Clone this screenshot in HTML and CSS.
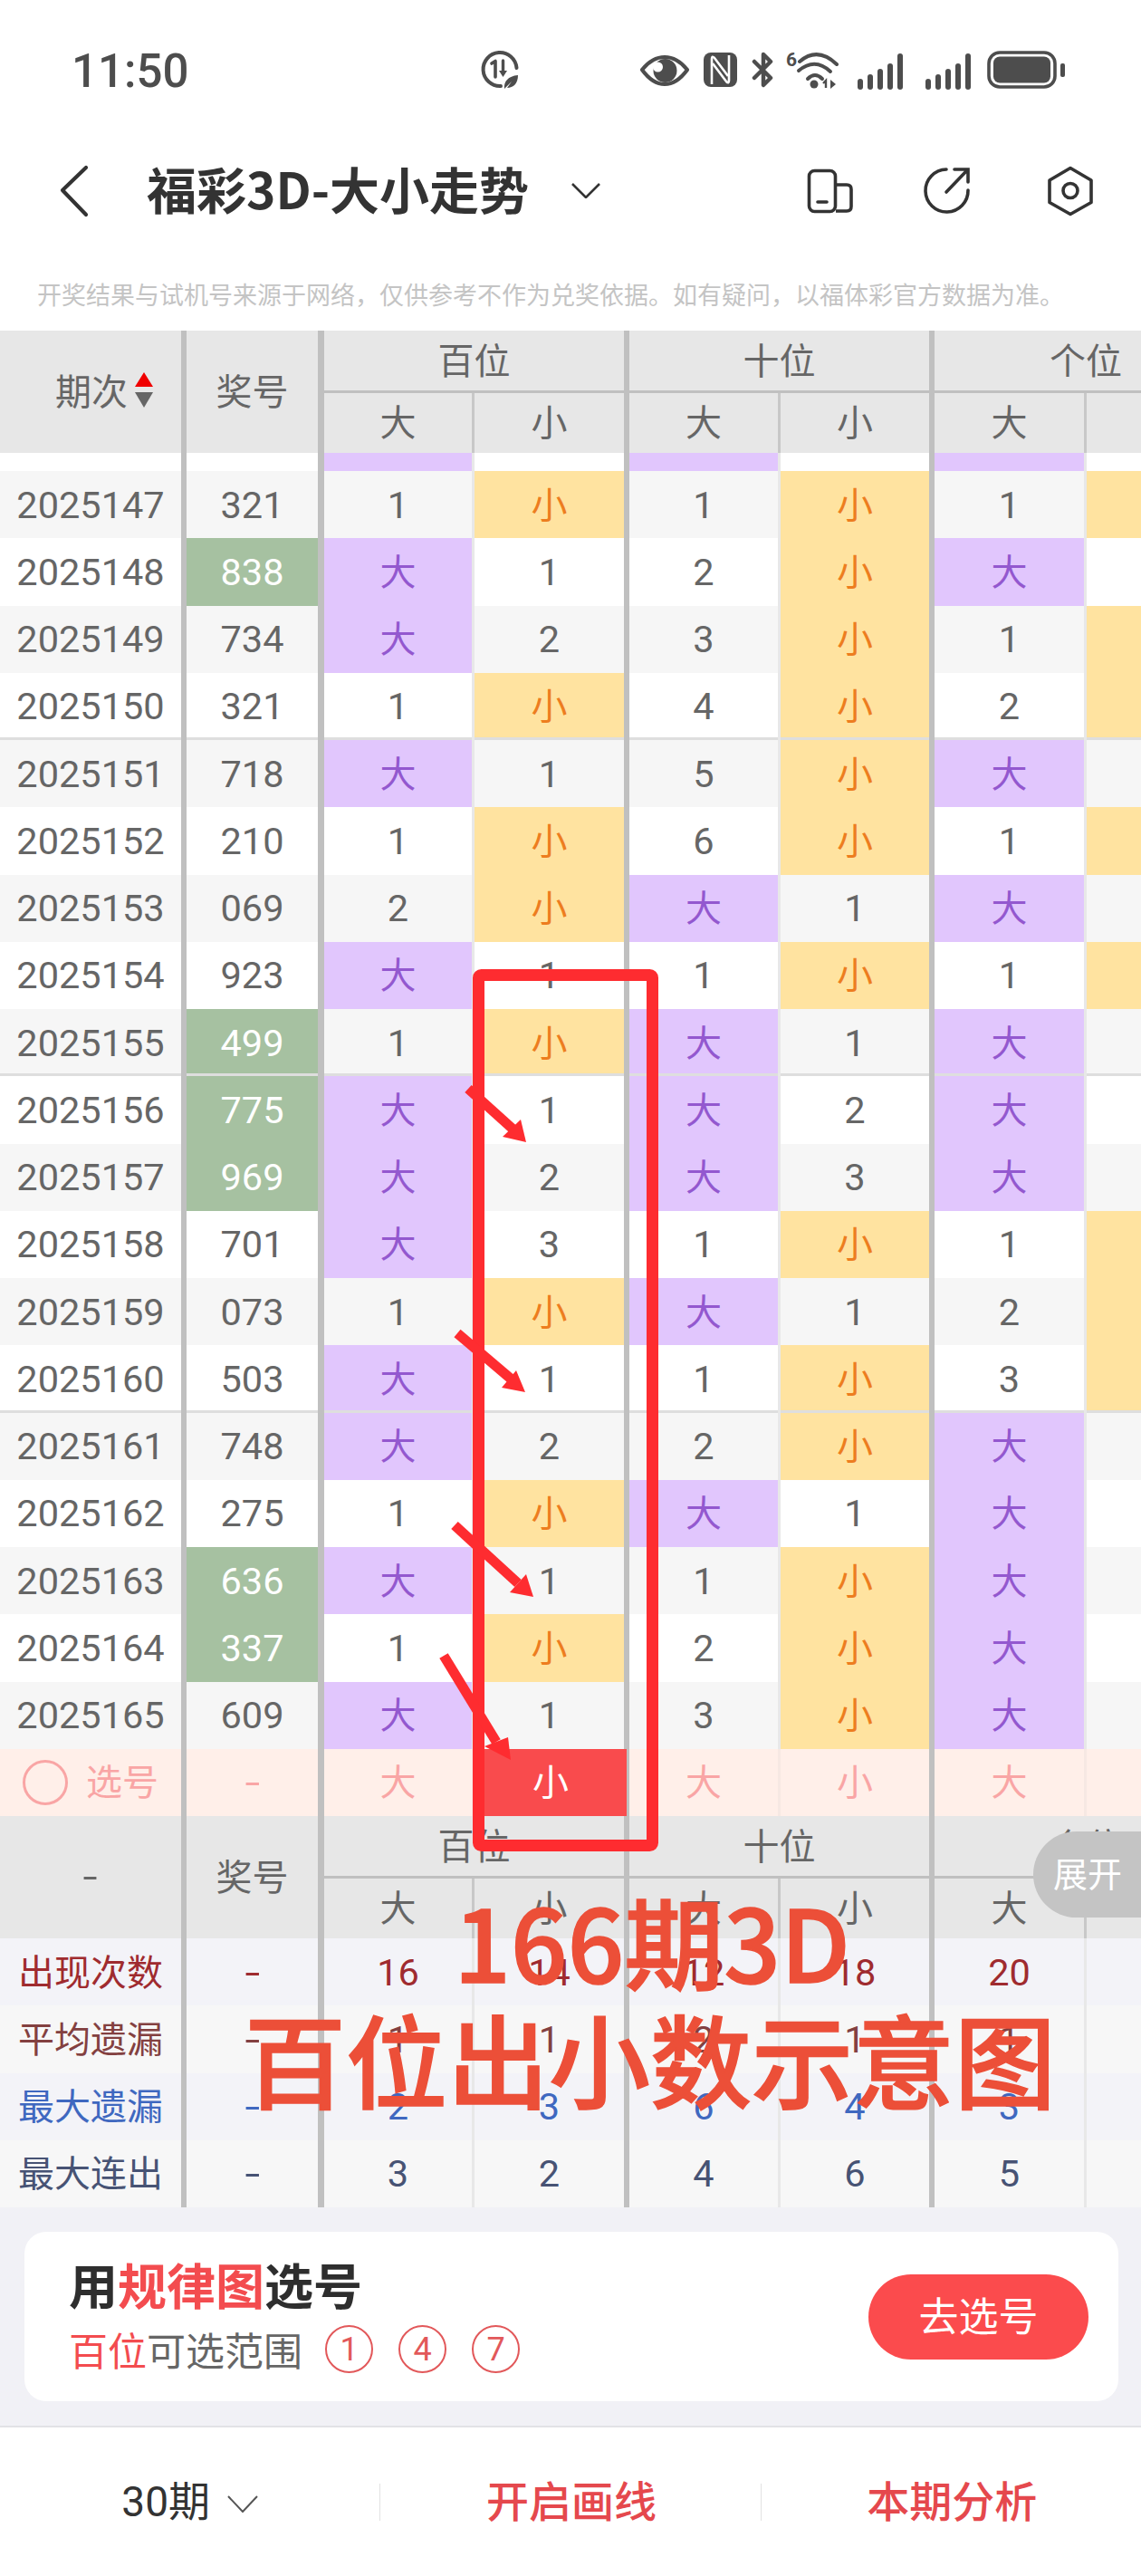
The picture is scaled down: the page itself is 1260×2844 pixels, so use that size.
FILE: index.html
```html
<!DOCTYPE html>
<html lang="zh-CN">
<head>
<meta charset="utf-8">
<title>福彩3D-大小走势</title>
<link rel="stylesheet" href="styles.css">
</head>
<body>
<div class="page">
  <div class="status">
    <div class="time">11:50</div>
    <svg class="ic-clock" width="48" height="46" viewBox="0 0 48 46"><path d="M40.5 21A18.5 18.5 0 1 0 23 41" fill="none" stroke="#4d4d4d" stroke-width="4" stroke-linecap="round"/><path d="M13 16l4-2.500V31" fill="none" stroke="#4d4d4d" stroke-width="3.600" stroke-linecap="round" stroke-linejoin="round"/><path d="M25.500 13V27" fill="none" stroke="#4d4d4d" stroke-width="3.400" stroke-linecap="round"/><path d="M21 24h9l-4.500 7z" fill="#4d4d4d"/><path d="M27 44c-1-8 4-14 15-15 0 9-5 14-12 14l5-7-8 8z" fill="#4d4d4d"/></svg>
    <svg class="ic-eye" width="58" height="40" viewBox="0 0 58 40"><path d="M4 20C12 10 20 6 29 6S46 10 54 20C46 31 38 36 29 36S12 31 4 20Z" fill="none" stroke="#4d4d4d" stroke-width="4.200" stroke-linejoin="round"/><circle cx="29.500" cy="21" r="13" fill="#4d4d4d"/><circle cx="21.500" cy="17" r="5.500" fill="#fff"/></svg>
    <svg class="ic-nfc" width="37" height="38" viewBox="0 0 37 38"><rect width="37" height="38" rx="8" fill="#4d4d4d"/><path d="M9 35V7Q9 3 12 6L27 26" fill="none" stroke="#fff" stroke-width="2.600"/><path d="M28 3V31Q28 35 25 32L10 12" fill="none" stroke="#fff" stroke-width="2.600"/></svg>
    <svg class="ic-bt" width="24" height="40" viewBox="0 0 24 40"><path d="M3 11L21 29L13 37V3L21 11L3 29" fill="none" stroke="#4d4d4d" stroke-width="4.500" stroke-linecap="round" stroke-linejoin="round"/></svg>
    <div class="wifi">
      <span class="wifi-six">6</span>
      <svg width="60" height="45" viewBox="0 0 60 45"><path d="M17 13Q37-4 58 16" fill="none" stroke="#4d4d4d" stroke-width="4" stroke-linecap="round"/><path d="M16 23Q34 8 51 24" fill="none" stroke="#4d4d4d" stroke-width="4" stroke-linecap="round"/><path d="M26 32Q34 24 42 32" fill="none" stroke="#4d4d4d" stroke-width="4" stroke-linecap="round"/><circle cx="33" cy="38" r="4.500" fill="#4d4d4d"/><path d="M46 42V34l-3 3" fill="none" stroke="#4d4d4d" stroke-width="2.400"/><path d="M51 33v10l6-5z" fill="#4d4d4d"/></svg>
    </div>
    <svg class="ic-sig1" width="50" height="41" viewBox="0 0 50 41"><rect x="0" y="29" width="6" height="12" rx="3" fill="#4d4d4d"/><rect x="11" y="24" width="6" height="17" rx="3" fill="#4d4d4d"/><rect x="22" y="18" width="6" height="23" rx="3" fill="#4d4d4d"/><rect x="33" y="12" width="6" height="29" rx="3" fill="#4d4d4d"/><rect x="44" y="1" width="6" height="40" rx="3" fill="#4d4d4d"/></svg>
    <svg class="ic-sig2" width="50" height="41" viewBox="0 0 50 41"><rect x="0" y="29" width="6" height="12" rx="3" fill="#4d4d4d"/><rect x="11" y="24" width="6" height="17" rx="3" fill="#4d4d4d"/><rect x="22" y="18" width="6" height="23" rx="3" fill="#4d4d4d"/><rect x="33" y="12" width="6" height="29" rx="3" fill="#4d4d4d"/><rect x="44" y="1" width="6" height="40" rx="3" fill="#4d4d4d"/></svg>
    <svg class="ic-bat" width="88" height="42" viewBox="0 0 88 42"><rect x="3" y="2" width="73" height="38" rx="12" fill="none" stroke="#4d4d4d" stroke-width="3.600"/><rect x="8" y="6.500" width="63" height="29" rx="7" fill="#4d4d4d"/><rect x="82" y="14" width="5" height="15" rx="2" fill="#4d4d4d"/></svg>
  </div>

  <div class="nav">
    <svg class="ic-back" width="35" height="60" viewBox="0 0 35 60"><path d="M30 4L4 29L30 56" fill="none" stroke="#333" stroke-width="4.200" stroke-linecap="round" stroke-linejoin="round"/></svg>
    <h1 class="title">福彩3D-大小走势</h1>
    <svg class="ic-down" width="32" height="17" viewBox="0 0 32 17"><path d="M1 1L16 16L31 1" fill="none" stroke="#333" stroke-width="2.600"/></svg>
    <svg class="ic-fold" width="54" height="52" viewBox="0 0 54 52"><rect x="3.500" y="3.500" width="29" height="45" rx="6" fill="none" stroke="#333" stroke-width="3.600"/><path d="M33 19H45Q50 19 50 24V43Q50 48 45 48H33" fill="none" stroke="#333" stroke-width="3.600"/><path d="M13 38H23" stroke="#333" stroke-width="3.600" stroke-linecap="round"/></svg>
    <svg class="ic-share" width="54" height="54" viewBox="0 0 54 54"><path d="M26 3A23.500 23.500 0 1 0 50 26" fill="none" stroke="#333" stroke-width="3.600" stroke-linecap="round"/><path d="M26 28L49 4M35 3H50V17" fill="none" stroke="#333" stroke-width="3.600" stroke-linecap="round"/></svg>
    <svg class="ic-hex" width="54" height="58" viewBox="0 0 54 58"><path d="M27 3.500L50 17V41.500L27 54.500L4 41.500V17Z" fill="none" stroke="#333" stroke-width="3.600" stroke-linejoin="round"/><circle cx="27" cy="28.500" r="8" fill="none" stroke="#333" stroke-width="3.600"/></svg>
  </div>

  <p class="note">开奖结果与试机号来源于网络，仅供参考不作为兑奖依据。如有疑问，以福体彩官方数据为准。</p>

  <div class="board">
    <div class="thead">
      <div class="th-id"><span>期次</span><span class="sort"><i class="up"></i><i class="dn"></i></span></div>
      <div class="th-no">奖号</div>
      <div class="th-g">百位</div>
      <div class="th-g">十位</div>
      <div class="th-g th-last">个位</div>
      <div class="th-s">大</div><div class="th-s th-r">小</div>
      <div class="th-s">大</div><div class="th-s th-r">小</div>
      <div class="th-s">大</div><div class="th-s th-e">小</div>
    </div>

    <div class="rows">
      <div class="row part"><div></div><div></div><div class="b"></div><div></div><div class="b"></div><div></div><div class="b"></div><div></div></div>
      <div class="row"><div>2025147</div><div>321</div><div>1</div><div class="s">小</div><div>1</div><div class="s">小</div><div>1</div><div class="s">小</div></div>
      <div class="row"><div>2025148</div><div class="g">838</div><div class="b">大</div><div>1</div><div>2</div><div class="s">小</div><div class="b">大</div><div>1</div></div>
      <div class="row"><div>2025149</div><div>734</div><div class="b">大</div><div>2</div><div>3</div><div class="s">小</div><div>1</div><div class="s">小</div></div>
      <div class="row cut"><div>2025150</div><div>321</div><div>1</div><div class="s">小</div><div>4</div><div class="s">小</div><div>2</div><div class="s">小</div></div>
      <div class="row"><div>2025151</div><div>718</div><div class="b">大</div><div>1</div><div>5</div><div class="s">小</div><div class="b">大</div><div>1</div></div>
      <div class="row"><div>2025152</div><div>210</div><div>1</div><div class="s">小</div><div>6</div><div class="s">小</div><div>1</div><div class="s">小</div></div>
      <div class="row"><div>2025153</div><div>069</div><div>2</div><div class="s">小</div><div class="b">大</div><div>1</div><div class="b">大</div><div>1</div></div>
      <div class="row"><div>2025154</div><div>923</div><div class="b">大</div><div>1</div><div>1</div><div class="s">小</div><div>1</div><div class="s">小</div></div>
      <div class="row cut"><div>2025155</div><div class="g">499</div><div>1</div><div class="s">小</div><div class="b">大</div><div>1</div><div class="b">大</div><div>1</div></div>
      <div class="row"><div>2025156</div><div class="g">775</div><div class="b">大</div><div>1</div><div class="b">大</div><div>2</div><div class="b">大</div><div>1</div></div>
      <div class="row"><div>2025157</div><div class="g">969</div><div class="b">大</div><div>2</div><div class="b">大</div><div>3</div><div class="b">大</div><div>2</div></div>
      <div class="row"><div>2025158</div><div>701</div><div class="b">大</div><div>3</div><div>1</div><div class="s">小</div><div>1</div><div class="s">小</div></div>
      <div class="row"><div>2025159</div><div>073</div><div>1</div><div class="s">小</div><div class="b">大</div><div>1</div><div>2</div><div class="s">小</div></div>
      <div class="row cut"><div>2025160</div><div>503</div><div class="b">大</div><div>1</div><div>1</div><div class="s">小</div><div>3</div><div class="s">小</div></div>
      <div class="row"><div>2025161</div><div>748</div><div class="b">大</div><div>2</div><div>2</div><div class="s">小</div><div class="b">大</div><div>1</div></div>
      <div class="row"><div>2025162</div><div>275</div><div>1</div><div class="s">小</div><div class="b">大</div><div>1</div><div class="b">大</div><div>2</div></div>
      <div class="row"><div>2025163</div><div class="g">636</div><div class="b">大</div><div>1</div><div>1</div><div class="s">小</div><div class="b">大</div><div>3</div></div>
      <div class="row"><div>2025164</div><div class="g">337</div><div>1</div><div class="s">小</div><div>2</div><div class="s">小</div><div class="b">大</div><div>4</div></div>
      <div class="row"><div>2025165</div><div>609</div><div class="b">大</div><div>1</div><div>3</div><div class="s">小</div><div class="b">大</div><div>5</div></div>
      <div class="row pick"><div class="zh"><span class="ring"></span><span>选号</span></div><div><span class="dash">-</span></div><div class="zh">大</div><div class="on zh">小</div><div class="zh">大</div><div class="zh">小</div><div class="zh">大</div><div class="zh">小</div></div>
    </div>

    <div class="thead">
      <div class="th-id th-blank"><span class="dash">-</span></div>
      <div class="th-no">奖号</div>
      <div class="th-g">百位</div>
      <div class="th-g">十位</div>
      <div class="th-g th-last">个位</div>
      <div class="th-s">大</div><div class="th-s th-r">小</div>
      <div class="th-s">大</div><div class="th-s th-r">小</div>
      <div class="th-s">大</div><div class="th-s th-e">小</div>
    </div>

    <div class="stats">
      <div class="row st st-a"><div class="zh">出现次数</div><div><span class="dash">-</span></div><div>16</div><div>14</div><div>12</div><div>18</div><div>20</div><div>12</div></div>
      <div class="row st st-b"><div class="zh">平均遗漏</div><div><span class="dash">-</span></div><div>1</div><div>1</div><div>2</div><div>1</div><div>1</div><div>1</div></div>
      <div class="row st st-c"><div class="zh">最大遗漏</div><div><span class="dash">-</span></div><div>2</div><div>3</div><div>6</div><div>4</div><div>3</div><div>4</div></div>
      <div class="row st st-d"><div class="zh">最大连出</div><div><span class="dash">-</span></div><div>3</div><div>2</div><div>4</div><div>6</div><div>5</div><div>3</div></div>
    </div>
  </div>

  <div class="tray">
    <div class="card">
      <div class="card-text">
        <div class="card-title">用<em>规律图</em>选号</div>
        <div class="card-sub"><span><em>百位</em>可选范围</span><b class="num">1</b><b class="num">4</b><b class="num">7</b></div>
      </div>
      <div class="go">去选号</div>
    </div>
  </div>

  <div class="tabs">
    <div class="tab tab-sel">30期<svg width="34" height="19" viewBox="0 0 34 19"><path d="M1 1L17 18L33 1" fill="none" stroke="#555" stroke-width="2"/></svg></div>
    <div class="divider"></div>
    <div class="tab tab-red">开启画线</div>
    <div class="divider"></div>
    <div class="tab tab-red">本期分析</div>
  </div>

  <svg class="marks" width="1260" height="2844" viewBox="0 0 1260 2844">
    <rect x="528.500" y="1076.500" width="192" height="961" rx="3" fill="none" stroke="#fe2c30" stroke-width="13"/>
    <g stroke="#fe2c30" stroke-width="11" fill="#fe2c30">
      <line x1="517" y1="1202" x2="568" y2="1248"/>
      <line x1="505" y1="1472" x2="565" y2="1523"/>
      <line x1="502" y1="1684" x2="572" y2="1748"/>
      <line x1="490" y1="1828" x2="548" y2="1923"/>
    </g>
    <g fill="#fe2c30">
      <polygon points="575,1236 555,1255 581,1261"/>
      <polygon points="570,1513 554,1532 580,1537"/>
      <polygon points="581,1738 563,1758 589,1763"/>
      <polygon points="561,1918 535,1928 564,1943"/>
    </g>
  </svg>
  <div class="caption"><div class="cap-a">166期3D</div><div>百位出小数示意图</div></div>
  <div class="expand">展开</div>
</div>
</body>
</html>
```

FILE: styles.css
```css
* { box-sizing: border-box; }
html, body { margin: 0; padding: 0; background: #fff; }
body { font-family: Roboto, "Noto Sans CJK SC", sans-serif; color: #666; }
.page { position: relative; width: 1260px; height: 2844px; overflow: hidden; display: flex; flex-direction: column; background: #fff; }

/* status bar */
.status { height: 154px; display: flex; align-items: center; padding-left: 79px; flex: none; }
.time { width: 451px; font-size: 51px; font-weight: 500; color: #4d4d4d; line-height: 60px; padding-top: 3px; }
.ic-clock { margin-top: -1px; }
.ic-eye { margin-left: 127px; }
.ic-nfc { margin-left: 14px; }
.ic-bt { margin-left: 16px; }
.wifi { margin-left: 12px; width: 60px; height: 45px; position: relative; }
.wifi svg { display: block; }
.wifi-six { position: absolute; left: 2px; top: -1px; font: 700 21px/24px Roboto, sans-serif; color: #4d4d4d; }
.ic-sig1 { margin-left: 21px; margin-top: 2px; }
.ic-sig2 { margin-left: 25px; margin-top: 2px; }
.ic-bat { margin-left: 17px; }

/* nav */
.nav { height: 114px; display: flex; align-items: center; padding-left: 65px; flex: none; }
.title { margin: 0 0 8px 62px; width: 469px; font: 700 55px/70px "Noto Sans CJK SC", sans-serif; color: #333; white-space: nowrap; }
.ic-down { margin-top: -2px; }
.ic-fold { margin-left: 227px; }
.ic-share { margin-left: 75px; }
.ic-hex { margin-left: 82px; }

.note { margin: 0; height: 97px; padding: 35px 0 0 41px; font: 400 27px/44px "Noto Sans CJK SC", sans-serif; color: #c4c4c4; white-space: nowrap; flex: none; }

/* table */
.board { width: 1260px; overflow: hidden; flex: none; }
.thead { width: 1366px; height: 135px; background: #e7e7e7; display: grid; grid-template-columns: 206px 152px 166px 171px 167px 170px 168px 166px; grid-template-rows: 69px 66px; font-size: 40px; color: #666; }
.thead > div { display: flex; align-items: center; justify-content: center; }
.th-id { grid-row: 1 / 3; border-right: 6px solid #c0c0c0; padding: 0 0 5px 30px; gap: 8px; }
.th-no { grid-row: 1 / 3; border-right: 7px solid #c0c0c0; padding-bottom: 6px; }
.th-g { grid-column: span 2; border-right: 6px solid #c0c0c0; border-bottom: 3px solid #c0c0c0; padding-bottom: 5px; }
.th-last { border-right: 0; }
.th-s { border-right: 3px solid #c8c8c8; padding-bottom: 6px; }
.th-r { border-right: 6px solid #c0c0c0; }
.th-e { border-right: 0; }
.thead > .th-blank { padding: 0; }
.sort { display: flex; flex-direction: column; gap: 6px; }
.sort i { display: block; width: 0; height: 0; border-left: 10px solid transparent; border-right: 10px solid transparent; }
.sort .up { border-bottom: 16px solid #f00000; }
.sort .dn { border-top: 17px solid #666; }
.dash { display: inline-block; transform: scaleX(1.45); }

.rows, .stats { width: 1366px; }
.row { display: grid; grid-template-columns: 206px 152px 166px 171px 167px 170px 168px 166px; height: 74.250px; font-size: 41.500px; color: #666; background: #fff; }
.row > div { display: flex; align-items: center; justify-content: center; border-right: 3px solid #e8e8e8; }
.row > div:nth-child(1) { border-right: 6px solid #c0c0c0; }
.row > div:nth-child(2) { border-right: 7px solid #c0c0c0; }
.row > div:nth-child(4), .row > div:nth-child(6) { border-right: 6px solid #c0c0c0; }
.row > div:nth-child(8) { border-right: 0; }
.rows .row:nth-child(even) { background: #f6f6f6; }
.row.part { height: 20px; }
.row .b, .row .s, .row .zh { font-size: 40px; padding-bottom: 5px; }
.row .b { background: #e1c6fd; color: #9358cf; border-right-color: #e8e8e8; }
.row .s { background: #ffe3a0; color: #ed7d1f; }
.row .g { background: #a6c1a1; color: #fff; }
.row.cut > div { box-shadow: inset 0 -3px 0 #dedede; }
.rows .row.pick { background: #ffefe9; color: #f9a5a5; }
.row.pick > div:nth-child(n+3) { border-right-color: #f6e8e3; }
.row.pick > div:nth-child(4), .row.pick > div:nth-child(6) { border-right-color: #c0c0c0; }
.row.pick > div:first-child { gap: 20px; }
.ring { width: 50px; height: 50px; border: 3px solid #f9a5a5; border-radius: 50%; margin-top: 5px; }
.row.pick .on { background: #f94b4d; color: #fff; border-right-width: 3px; }

.st-a { background: #f3f3f8; color: #9f2b2f; }
.st-b { background: #f7f7f7; color: #834040; }
.st-c { background: #f3f3f8; color: #3f68c0; }
.st-d { background: #f7f7f7; color: #475374; }

/* recommend card */
.tray { height: 241px; padding: 27px 25px 0 27px; background: #f1f1f6; flex: none; }
.card { height: 187px; border-radius: 24px; background: #fff; display: flex; justify-content: space-between; align-items: center; padding: 0 33px 0 49px; }
.card-text { display: flex; flex-direction: column; gap: 15px; padding-bottom: 3px; }
.card em { font-style: normal; color: #f34c4f; }
.card-title { font: 700 54px/60px "Noto Sans CJK SC", sans-serif; color: #2e2e2e; }
.card-sub { display: flex; align-items: center; font: 400 43px/53px "Noto Sans CJK SC", sans-serif; color: #666; }
.num { width: 53px; height: 53px; border: 2px solid #e2585a; border-radius: 50%; margin-left: 28px; display: flex; align-items: center; justify-content: center; font: 400 36px/1 Roboto, sans-serif; color: #e2585a; }
.card-sub span + .num { margin-left: 25px; }
.go { width: 243px; height: 94px; border-radius: 47px; background: #fb4b4d; color: #fff; font: 400 44px/88px "Noto Sans CJK SC", sans-serif; text-align: center; }

/* bottom tabs */
.tabs { flex: 1; border-top: 2px solid #e2e2e6; display: flex; align-items: center; background: #fff; }
.tab { width: 420.500px; display: flex; align-items: center; justify-content: center; gap: 19px; font-size: 46px; line-height: 60px; }
.tab-sel { color: #333; }
.tab-sel svg { margin-top: 4px; }
.tab-red { font: 500 47px/60px "Noto Sans CJK SC", sans-serif; color: #e5484d; padding: 0 0 6px 2px; }
.divider { width: 1px; height: 41px; background: #e2e2e2; flex: none; }

/* annotations drawn over the screenshot */
.marks { position: absolute; left: 0; top: 0; pointer-events: none; }
.caption { position: absolute; left: 178px; top: 2076px; width: 1080px; text-align: center; font: 500 112px/130px "Noto Sans CJK SC", sans-serif; color: #ec4f38; white-space: nowrap; -webkit-text-stroke: 1.500px #ec4f38; }
.cap-a { font-size: 110px; padding-left: 4px; }
.expand { position: absolute; right: 0; top: 2022px; width: 119px; height: 95px; padding-left: 22px; border-radius: 48px 0 0 48px; background: #c4c4c4; color: #fff; font: 400 38px/90px "Noto Sans CJK SC", sans-serif; }
```
